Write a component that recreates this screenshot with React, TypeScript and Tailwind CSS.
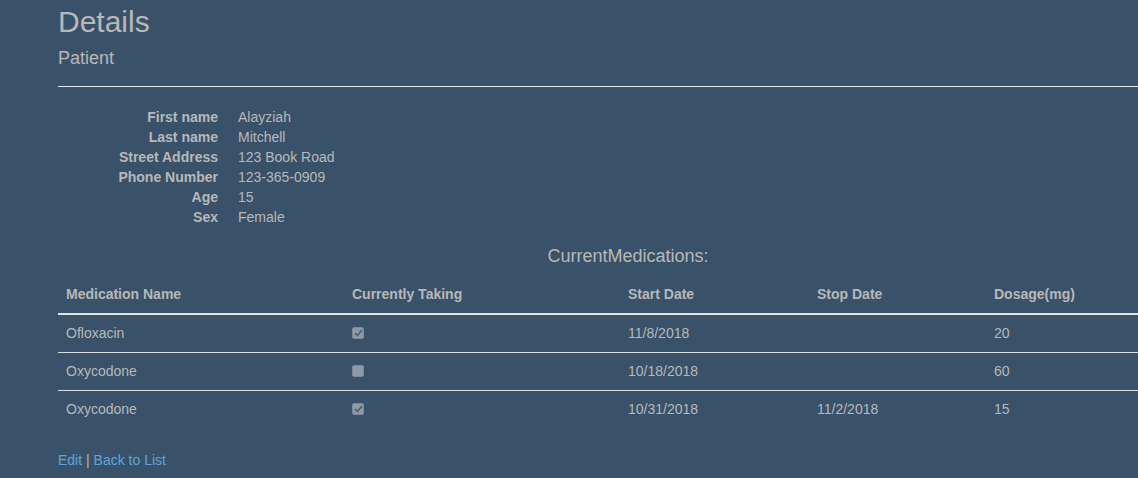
import React from 'react';

type Med = {
  name: string;
  taking: boolean;
  start: string;
  stop: string;
  dose: string;
};

const patient: [string, string][] = [
  ['First name', 'Alayziah'],
  ['Last name', 'Mitchell'],
  ['Street Address', '123 Book Road'],
  ['Phone Number', '123-365-0909'],
  ['Age', '15'],
  ['Sex', 'Female'],
];

const meds: Med[] = [
  { name: 'Ofloxacin', taking: true, start: '11/8/2018', stop: '', dose: '20' },
  { name: 'Oxycodone', taking: false, start: '10/18/2018', stop: '', dose: '60' },
  { name: 'Oxycodone', taking: true, start: '10/31/2018', stop: '11/2/2018', dose: '15' },
];

function DisabledCheckbox({ checked }: { checked: boolean }) {
  return (
    <div className="w-[12px] h-[12px] rounded-[2px] bg-[#8d9aa7] border border-[#7d8995] flex items-center justify-center">
      {checked && (
        <svg width="9" height="8" viewBox="0 0 9 8" fill="none">
          <path d="M1 4.2 L3.4 6.5 L8 1.2" stroke="#56616d" strokeWidth="1.8" />
        </svg>
      )}
    </div>
  );
}

export default function App() {
  return (
    <div className="min-h-screen w-full overflow-hidden bg-[#39526a] text-[#b8b8b8] font-['Liberation_Sans',Arial,sans-serif] text-[14px] leading-[20px]">
      <div className="ml-[58px] w-[1140px] pt-[5px]">
        <h2 className="text-[30px] leading-[33px] font-normal">Details</h2>
        <h4 className="mt-[10px] text-[18px] leading-[20px] font-normal">Patient</h4>
        <hr className="mt-[18px] border-0 border-t border-[#e8e8e8]" />

        <dl className="mt-[20px]">
          {patient.map(([label, value]) => (
            <div key={label} className="flex">
              <dt className="w-[160px] text-right font-bold">{label}</dt>
              <dd className="ml-[20px]">{value}</dd>
            </div>
          ))}
        </dl>

        <h4 className="mt-[19px] text-center text-[18px] leading-[20px] font-normal">CurrentMedications:</h4>

        <table className="mt-[10px] w-full table-fixed border-collapse">
          <colgroup>
            <col className="w-[286px]" />
            <col className="w-[276px]" />
            <col className="w-[189px]" />
            <col className="w-[177px]" />
            <col />
          </colgroup>
          <thead>
            <tr className="border-b-2 border-[#e3e3e3]">
              <th className="h-[38px] px-[8px] pt-[8px] text-left font-bold align-top">Medication Name</th>
              <th className="px-[8px] pt-[8px] text-left font-bold align-top">Currently Taking</th>
              <th className="px-[8px] pt-[8px] text-left font-bold align-top">Start Date</th>
              <th className="px-[8px] pt-[8px] text-left font-bold align-top">Stop Date</th>
              <th className="px-[8px] pt-[8px] text-left font-bold align-top">Dosage(mg)</th>
            </tr>
          </thead>
          <tbody>
            {meds.map((m, i) => (
              <tr key={i} className={i < meds.length - 1 ? 'border-b border-[#dcdcdc]' : ''}>
                <td className="h-[38px] px-[8px] align-middle">{m.name}</td>
                <td className="px-[8px] align-middle">
                  <DisabledCheckbox checked={m.taking} />
                </td>
                <td className="px-[8px] align-middle">{m.start}</td>
                <td className="px-[8px] align-middle">{m.stop}</td>
                <td className="px-[8px] align-middle">{m.dose}</td>
              </tr>
            ))}
          </tbody>
        </table>

        <p className="mt-[22px]">
          <a className="text-[#5fa4de]" href="#">Edit</a>
          <span> | </span>
          <a className="text-[#5fa4de]" href="#">Back to List</a>
        </p>
      </div>
    </div>
  );
}
